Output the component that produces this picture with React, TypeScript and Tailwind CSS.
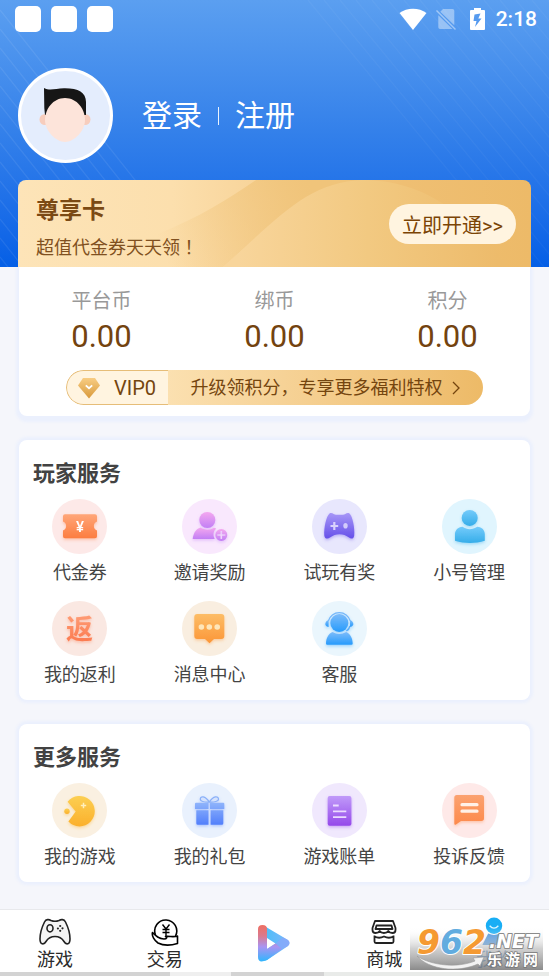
import type { ReactNode } from "react";

type Service = { label: string; icon: ReactNode };

function Gradient({ id, from, to }: { id: string; from: string; to: string }) {
  return (
    <linearGradient id={id} x1="0" y1="0" x2="0" y2="1">
      <stop offset="0" stopColor={from} />
      <stop offset="1" stopColor={to} />
    </linearGradient>
  );
}

function Badge({
  id,
  bg,
  from,
  to,
  children,
}: {
  id: string;
  bg: string;
  from: string;
  to: string;
  children: ReactNode;
}) {
  return (
    <svg viewBox="0 0 55 55" className="size-[55px]" aria-hidden="true">
      <defs>
        <Gradient id={id} from={from} to={to} />
        <filter id={`${id}-shadow`} x="-30%" y="-30%" width="160%" height="160%">
          <feDropShadow dx="0" dy="1.5" stdDeviation="1.5" floodColor={to} floodOpacity="0.4" />
        </filter>
      </defs>
      <circle cx="27.5" cy="27.5" r="27.5" fill={bg} />
      <g fill={`url(#${id})`} filter={`url(#${id}-shadow)`}>
        {children}
      </g>
    </svg>
  );
}

const playerServices: Service[] = [
  {
    label: "代金券",
    icon: (
      <Badge id="ticket" bg="#fde9e8" from="#ffa679" to="#fc7d40">
        <path d="M13 15.3H43A2 2 0 0 1 45 17.3V22.5A4.8 4.8 0 0 0 45 31.5V37.3A2 2 0 0 1 43 39.3H13A2 2 0 0 1 11 37.3V31.5A4.8 4.8 0 0 0 11 22.5V17.3A2 2 0 0 1 13 15.3Z" />
        <text x="28" y="33" textAnchor="middle" fontSize="15" fontWeight="500" fill="#fff" fontFamily="Roboto, sans-serif">¥</text>
      </Badge>
    ),
  },
  {
    label: "邀请奖励",
    icon: (
      <Badge id="invite" bg="#f9e8fd" from="#f4a8ef" to="#c27ff5">
        <circle cx="25.3" cy="21" r="8" />
        <path d="M10.7 40C11.5 34 14 30 18.5 28.5C23 31.3 28 31.3 32 28.7L34.2 29.6A8 8 0 0 0 32.7 40Z" />
        <path fillRule="evenodd" d="M39.3 30A6 6 0 1 1 39.3 42A6 6 0 1 1 39.3 30ZM38.5 32V35.2H35.3V36.8H38.5V40H40.1V36.8H43.3V35.2H40.1V32Z" />
      </Badge>
    ),
  },
  {
    label: "试玩有奖",
    icon: (
      <Badge id="trial" bg="#e8e7fd" from="#a797f7" to="#6650e9">
        <path d="M17.5 14.5C20 12.8 22 15.8 24 15.8H31C33 15.8 35 12.8 37.5 14.5C40.5 17 43 29.5 42.2 36.5C41.6 40.4 38.8 40 37 38.5C31.5 34 23.5 34 18 38.5C16.2 40 12.8 40.4 12.3 36.5C11.7 29.5 14.3 17 17.5 14.5Z" />
        <path d="M22.3 23V31M18.5 27H26.2" stroke="#d9d2fc" strokeWidth="2.2" />
        <ellipse cx="33.5" cy="26.7" rx="2.2" ry="2.8" fill="#d3cbfb" />
      </Badge>
    ),
  },
  {
    label: "小号管理",
    icon: (
      <Badge id="account" bg="#e0f5fe" from="#74cbfb" to="#35ade9">
        <circle cx="27.7" cy="18.9" r="8" />
        <path d="M20.5 27.7C25 31 30.5 31 35.3 27.7C40 28 42.8 31.3 42.8 35V41.8C33 44.8 23 44.8 13 41.8V35C13 31.3 16 28 20.5 27.7Z" />
      </Badge>
    ),
  },
  {
    label: "我的返利",
    icon: (
      <Badge id="rebate" bg="#fae8e2" from="#ffa57f" to="#fb7448">
        <text x="27.5" y="38" textAnchor="middle" fontSize="27" fontWeight="700" fontFamily="'Noto Sans CJK SC', sans-serif">返</text>
      </Badge>
    ),
  },
  {
    label: "消息中心",
    icon: (
      <Badge id="message" bg="#f9eee0" from="#fdbd66" to="#fb9638">
        <path d="M15.3 13H39.3A3 3 0 0 1 42.3 16V35A3 3 0 0 1 39.3 38H32L27.5 42.3L23 38H15.3A3 3 0 0 1 12.3 35V16A3 3 0 0 1 15.3 13Z" />
        <g fill="#fee6b9">
          <circle cx="19.4" cy="26" r="2.8" />
          <circle cx="27.3" cy="26" r="2.8" />
          <circle cx="35.2" cy="26" r="2.8" />
        </g>
      </Badge>
    ),
  },
  {
    label: "客服",
    icon: (
      <Badge id="support" bg="#eaf6fd" from="#7dbcfa" to="#279bfc">
        <path d="M16.3 20A11.4 11.4 0 0 1 38.3 20" fill="none" stroke="#74b7fa" strokeWidth="1.2" />
        <path d="M16.6 19V26C14 25.5 12.9 23.8 13.4 22.2C14 20.5 15.2 19.3 16.6 19ZM38 19V26C40.6 25.5 41.8 23.8 41.2 22.2C40.6 20.5 39.4 19.3 38 19Z" />
        <path d="M38 25C37.4 27.6 36.2 29 34.3 30" fill="none" stroke="#5aaefa" strokeWidth="1.4" />
        <circle cx="27.3" cy="22" r="9" />
        <path d="M20.5 31C25 33.6 29.5 33.6 34.2 31C38.3 33 40.6 37 40.7 42.4Q40.7 43.7 39.5 43.7H15.2Q14 43.7 14 42.4C14.2 37 16.3 33 20.5 31Z" />
      </Badge>
    ),
  },
];

const moreServices: Service[] = [
  {
    label: "我的游戏",
    icon: (
      <Badge id="games" bg="#faf0e1" from="#fccf52" to="#fbb02c">
        <path d="M23.7 28.5L15.6 18.8A15.2 15.2 0 1 1 16.4 38.5Z" />
        <circle cx="15" cy="28.3" r="2.7" />
        <path d="M31.5 19.8V25.2M28.8 22.5H34.2" stroke="#fff0bd" strokeWidth="1.5" />
      </Badge>
    ),
  },
  {
    label: "我的礼包",
    icon: (
      <Badge id="gifts" bg="#e9f1fd" from="#8fb4fb" to="#527ffb">
        <path d="M27.3 19C23 12.5 18.4 12.8 18.3 16.2C18.3 18.3 22 19.3 27.3 19C32.6 19.3 36.5 18.3 36.5 16.2C36.3 12.8 31.6 12.5 27.3 19" fill="none" stroke="#8ab0f8" strokeWidth="1.3" />
        <path d="M14 19.7H26.5V26H13V20.7A1 1 0 0 1 14 19.7ZM28 19.7H41.3A1 1 0 0 1 42.3 20.7V26H28ZM14.3 27.3H26.5V41.7H15.8A1.5 1.5 0 0 1 14.3 40.2ZM28.6 27.3H41.3V40.2A1.5 1.5 0 0 1 39.8 41.7H28.6Z" />
      </Badge>
    ),
  },
  {
    label: "游戏账单",
    icon: (
      <Badge id="bills" bg="#f0e8fd" from="#c09af9" to="#9549ea">
        <rect x="15.7" y="13" width="23.7" height="29.7" rx="2" />
        <path d="M21 22.5H26.7M21 28.4H34.3M21 34.1H34.3" stroke="#ecdcff" strokeWidth="1.8" />
      </Badge>
    ),
  },
  {
    label: "投诉反馈",
    icon: (
      <Badge id="feedback" bg="#fee9e8" from="#fba270" to="#fd8a4c">
        <path d="M15.3 12H39.3A2.8 2.8 0 0 1 42 14.8V35.2A2.8 2.8 0 0 1 39.3 38H19L14 41.6Q12.3 42.3 12.3 40.5V14.8A2.8 2.8 0 0 1 15.3 12Z" />
        <path d="M20 21.7H35M20 28.2H35" stroke="#fff1e8" strokeWidth="3.2" strokeLinecap="round" />
      </Badge>
    ),
  },
];

const balances = [
  { label: "平台币", value: "0.00" },
  { label: "绑币", value: "0.00" },
  { label: "积分", value: "0.00" },
];

function HeaderStripes() {
  const left = Array.from({ length: 16 }, (_, i) => 10 + i * 19);
  const right = Array.from({ length: 18 }, (_, i) => 308 + i * 16);
  return (
    <svg className="pointer-events-none absolute inset-0 size-full" aria-hidden="true" stroke="#fff" strokeWidth="1.3">
      <g strokeOpacity="0.08">
        {left.map((y) => (
          <path key={y} d={`M0 ${y}L220 ${y + 277}`} />
        ))}
      </g>
      <g strokeOpacity="0.04">
        {right.map((x) => (
          <path key={x} d={`M${x} 0L${x + 220} 267`} />
        ))}
      </g>
    </svg>
  );
}

function StatusBar() {
  return (
    <div className="flex items-center justify-between pl-[15px] pr-3 pt-[6px]">
      <div className="flex gap-[10px]">
        <span className="size-[26px] rounded-[5px] bg-white" />
        <span className="size-[26px] rounded-[5px] bg-white" />
        <span className="size-[26px] rounded-[5px] bg-white" />
      </div>
      <div className="flex h-[26px] items-center text-white">
        <svg viewBox="0 0 28 24" className="mr-2 h-6 w-7" fill="currentColor" aria-hidden="true">
          <path d="M.5 6C8 .2 20 .2 27.5 6L14 23Z" />
        </svg>
        <svg viewBox="0 0 22 24" className="mr-3 h-6 w-[22px]" aria-hidden="true">
          <path d="M8 2H17.5A1.8 1.8 0 0 1 19.3 3.8V18.2L5.3 4.8ZM3.3 8.2L17.5 22H5A1.7 1.7 0 0 1 3.3 20.3Z" fill="#fff" fillOpacity="0.4" />
          <path d="M1.500 3.500L20.500 22.500" stroke="#fff" strokeOpacity="0.45" strokeWidth="1.500" />
        </svg>
        <svg viewBox="0 0 17 24" className="mr-[10px] h-6 w-[17px]" aria-hidden="true">
          <path fillRule="evenodd" fill="#fff" d="M5 1H12V3H15A1 1 0 0 1 16 4V22A1 1 0 0 1 15 23H2A1 1 0 0 1 1 22V4A1 1 0 0 1 2 3H5ZM11.500 6.500L5.500 7.500L4.500 14H7.500L6 20L12.500 11.500H9.300Z" />
        </svg>
        <span className="font-['Roboto',sans-serif] text-[21px] font-medium leading-6">2:18</span>
      </div>
    </div>
  );
}

function Avatar() {
  return (
    <svg viewBox="0 0 95 95" className="size-[95px] shrink-0" role="img" aria-label="头像">
      <circle cx="47.5" cy="47.5" r="46" fill="#e4edfd" stroke="#fff" strokeWidth="3" />
      <circle cx="27" cy="51.5" r="5.5" fill="#f7cdbd" />
      <circle cx="67" cy="51.5" r="5.5" fill="#f7cdbd" />
      <path d="M26 20C32 23 37 20.5 46 20.2C60 20 68 24 68 34V47H27L26.3 40Z" fill="#161616" />
      <path d="M47 30C59 30 67 41 67 52C67 63 56 74 47 74C38 74 27 63 27 52C27 41 35 30 47 30Z" fill="#fde4da" />
    </svg>
  );
}

function PremiumBanner() {
  return (
    <section className="relative mx-[18px] mt-[17px] flex h-[87px] items-center justify-between overflow-hidden rounded-t-lg pl-[18px] pr-[15px]">
      <svg className="absolute inset-0 size-full" viewBox="0 0 513 87" preserveAspectRatio="none" aria-hidden="true">
        <defs>
          <linearGradient id="banner-base">
            <stop offset="0" stopColor="#fde4b8" />
            <stop offset="0.3" stopColor="#fcdfad" />
            <stop offset="0.5" stopColor="#f7d296" />
            <stop offset="0.75" stopColor="#efbf73" />
            <stop offset="1" stopColor="#edba68" />
          </linearGradient>
          <linearGradient id="banner-arc" gradientUnits="userSpaceOnUse" x1="220" y1="0" x2="480" y2="0">
            <stop offset="0" stopColor="#f8d59b" />
            <stop offset="0.5" stopColor="#f2c981" />
            <stop offset="1" stopColor="#edbb6b" />
          </linearGradient>
          <linearGradient id="banner-sweep" gradientUnits="userSpaceOnUse" x1="140" y1="60" x2="290" y2="0">
            <stop offset="0" stopColor="#f0c47a" stopOpacity="0" />
            <stop offset="1" stopColor="#f0c47a" />
          </linearGradient>
        </defs>
        <rect width="513" height="87" fill="url(#banner-base)" />
        <path d="M140 54C180 38 212 18 238 0H345C300 4 262 36 205 87H120Z" fill="url(#banner-sweep)" />
        <path d="M205 87C262 36 290 2 345 0C392 0 440 20 490 87Z" fill="url(#banner-arc)" />
      </svg>
      <div className="relative pt-3 text-[#7b4a14]">
        <h2 className="text-[23px] font-bold leading-7">尊享卡</h2>
        <p className="mt-[7px] text-lg leading-7 text-[#805020]">
          超值代金券天天领<span className="font-['Noto_Sans_CJK_JP',sans-serif]" lang="ja">！</span>
        </p>
      </div>
      <button type="button" className="relative h-10 w-[127px] rounded-full bg-[#fff4e0] pt-1 text-xl text-[#7b4405]">
        立即开通&gt;&gt;
      </button>
    </section>
  );
}

function VipBar() {
  return (
    <a href="#vip" className="mx-[47px] mt-[15px] flex h-[35px] overflow-hidden rounded-full text-[#74450f]">
      <span className="flex w-[102px] shrink-0 items-center justify-between rounded-l-full border border-r-0 border-[#e6bd78] bg-[#fff4e0] pl-[10px] pr-3">
        <svg viewBox="0 0 24 22" className="h-[22px] w-6" aria-hidden="true">
          <defs>
            <Gradient id="gem" from="#f8cd83" to="#d8993c" />
          </defs>
          <path d="M6 1H18L23 8.5L12 21.5L1 8.5Z" fill="url(#gem)" />
          <path d="M8.8 8.3L12 11.2L15.2 8.3" fill="none" stroke="#fff" strokeWidth="1.8" />
        </svg>
        <span className="text-xl">VIP0</span>
      </span>
      <span className="flex min-w-0 flex-1 items-center justify-center whitespace-nowrap bg-linear-to-r from-[#fbe0b0] to-[#edba67] text-lg">
        升级领积分，专享更多福利特权
        <svg viewBox="0 0 10 16" className="ml-2 h-4 w-[10px] shrink-0" fill="none" stroke="currentColor" strokeWidth="1.3" aria-hidden="true">
          <path d="M2 2L8 8L2 14" />
        </svg>
      </span>
    </a>
  );
}

function ServiceCard({ title, items }: { title: string; items: Service[] }) {
  return (
    <section className="mx-[19px] mt-6 rounded-lg bg-white pb-[11px] pt-5 shadow-[0_0_3px_3px_#ebf0fd]">
      <h2 className="pl-[14px] text-[22px] font-bold leading-7 text-[#424242]">{title}</h2>
      <div className="mt-[11px] grid grid-cols-4 gap-x-11 gap-y-[14px] px-[18px]">
        {items.map((item) => (
          <button key={item.label} type="button" className="flex flex-col items-center">
            {item.icon}
            <span className="mt-[5px] whitespace-nowrap text-lg leading-7 text-[#444]">{item.label}</span>
          </button>
        ))}
      </div>
    </section>
  );
}

function TabBar() {
  return (
    <nav className="relative mt-auto border-t border-[#e8e9ec] bg-white">
      <div className="grid h-[62px] grid-cols-5 text-lg leading-6 text-[#2b2b2b]">
        <a href="#games" className="flex flex-col items-center pt-2">
          <svg viewBox="0 0 32 28" className="h-7 w-8" fill="#f4f4f4" stroke="#222" strokeWidth="1.6" strokeLinejoin="round" aria-hidden="true">
            <path d="M5.5 4C7 1 10 1.2 12 2.5C14.5 3.5 17.5 3.5 20 2.5C22 1.2 25 1 26.5 4C29 9 31 15 31 21C31 27 27 27 25 23.5C22.5 19.5 20 18.5 16 18.5C12 18.5 9.5 19.5 7 23.5C5 27 1 27 1 21C1 15 3 9 5.5 4Z" />
            <ellipse cx="11" cy="10.3" rx="3" ry="3.6" />
            <g fill="#222" stroke="none">
              <circle cx="21.2" cy="8" r="1.1" />
              <circle cx="18.9" cy="10.5" r="1.1" />
              <circle cx="23.5" cy="10.3" r="1.1" />
              <circle cx="21.2" cy="12.8" r="1.1" />
            </g>
          </svg>
          <span className="mt-[2px]">游戏</span>
        </a>
        <a href="#trade" className="flex flex-col items-center pt-2">
          <svg viewBox="0 0 28 28" className="size-7" fill="none" stroke="#000" strokeWidth="1.6" strokeLinejoin="round" aria-hidden="true">
            <path d="M4.5 17A11 11 0 1 1 24.5 18" />
            <path d="M11.5 6.5L15 11L18.500 6.500M11.500 11.500H18.500M11.500 14.500H18.500M15 11V18" strokeWidth="1.4" />
            <path d="M1.500 14.500C5 18 8 21 13 21C16 21 16.500 19 14.500 18.500C19 18 22.500 19.500 26.500 18V25.500C20 27.500 12 27.500 7 25C3.500 22.500 .500 18 1.500 14.500Z" fill="#fff" />
          </svg>
          <span className="mt-[2px]">交易</span>
        </a>
        <a href="#home" aria-label="首页" className="flex justify-center pt-[14px]">
          <svg viewBox="0 0 34 38" className="h-[38px] w-[34px]" aria-hidden="true">
            <defs>
              <linearGradient id="play-left" x1="0" y1="0" x2="0" y2="1">
                <stop offset="0" stopColor="#ef6f62" />
                <stop offset="0.3" stopColor="#da7a8e" />
                <stop offset="0.6" stopColor="#a994f3" />
                <stop offset="1" stopColor="#2fb6fd" />
              </linearGradient>
              <linearGradient id="play-right">
                <stop offset="0" stopColor="#46c0f8" />
                <stop offset="1" stopColor="#7fb5fb" />
              </linearGradient>
            </defs>
            <path d="M9 3L31 16Q34 19 31 22L10 36Q6 38 5 34V4Q6 1 9 3ZM10 14V25L18.500 19.500Z" fill="url(#play-right)" fillRule="evenodd" />
            <path d="M18.500 19.500L26 13.500L31 16Q34 19 31 22L25 25Z" fill="#8aa5fa" fillOpacity=".7" />
            <path d="M1 5Q1 1 5.500 1Q10 1 10 5V25L18.500 19.500L25 25L10 36Q1 40 1 33Z" fill="url(#play-left)" />
          </svg>
        </a>
        <a href="#shop" className="flex flex-col items-center pt-2">
          <svg viewBox="0 0 26 28" className="h-7 w-[26px]" fill="none" stroke="#222" strokeWidth="1.8" strokeLinejoin="round" aria-hidden="true">
            <path d="M4 3H22L24.5 10V12Q24.500 15 21.500 15Q18.500 15 17.300 13Q16 15 13 15Q10 15 8.700 13Q7.500 15 4.500 15Q1.500 15 1.500 12V10Z" />
            <path d="M5.500 7.500H20.500L21.500 11H4.500Z" />
            <path d="M3.500 17.500V23.500Q3.500 25 5 25H21Q22.500 25 22.500 23.500V17.500M3.500 18.500Q8 21 13 18.500Q18 21 22.500 18.500" />
          </svg>
          <span className="mt-[2px]">商城</span>
        </a>
        <a href="#mine" className="flex flex-col items-center pt-[7px] text-[#3b7fd0]">
          <svg viewBox="0 0 26 30" className="h-[29px] w-[26px]" aria-hidden="true">
            <circle cx="13" cy="9" r="8.5" fill="#18aef5" />
            <path d="M8.500 9Q13 14 17.500 9" fill="none" stroke="#d9f4ff" strokeWidth="1.5" />
            <path d="M7 17Q13 20 19 17L25 29H1Z" fill="#3f8fe0" />
          </svg>
          <span className="mt-[2px]">我的</span>
        </a>
      </div>
      <div className="flex h-1">
        <span className="w-[31%] bg-[#d3d3d3]" />
        <span className="w-[11%] bg-[#efefef]" />
        <span className="w-[17%] bg-[#d3d3d3]" />
        <span className="flex-1 bg-[#e9ebe9]" />
      </div>
      <Watermark />
    </nav>
  );
}

function Watermark() {
  return (
    <svg viewBox="0 0 133 43" className="pointer-events-none absolute bottom-[6px] right-[6px] h-[43px] w-[133px] overflow-visible" role="img" aria-label="962.NET 乐游网">
      <defs>
        <linearGradient id="mark-bg" x1="0" y1="0" x2="0" y2="1">
          <stop offset="0" stopColor="#fff" stopOpacity="0" />
          <stop offset="0.5" stopColor="#bdbdbd" stopOpacity=".7" />
          <stop offset="1" stopColor="#767676" stopOpacity=".85" />
        </linearGradient>
      </defs>
      <rect width="133" height="43" fill="url(#mark-bg)" />
      <path d="M7 29C22 39 48 41 65 34L63 31L74 30L70 39L68 37C48 46 19 43 7 29Z" fill="#f2f2f2" stroke="#999" strokeWidth=".6" />
      <g fontFamily="'DejaVu Sans', sans-serif" fontWeight="700" fontStyle="italic" strokeLinejoin="round" paintOrder="stroke">
        <text x="7" y="27" fontSize="33" stroke="#fff" strokeWidth="2">
          <tspan fill="#f59a32">9</tspan>
          <tspan fill="#62acdf">6</tspan>
          <tspan fill="#f59a32">2</tspan>
        </text>
        <text x="79" y="21" fontSize="19" fill="#fff" stroke="#8b8b8b" strokeWidth="2">.NET</text>
      </g>
      <text x="77 95 113" y="38" fontSize="15" fontWeight="700" fontFamily="'Noto Sans CJK SC', sans-serif" fill="#fff" stroke="#777" strokeWidth="1.5" paintOrder="stroke">乐游网</text>
    </svg>
  );
}

export default function App() {
  return (
    <div className="flex min-h-screen flex-col bg-[#f5f6fb] font-['Roboto','Noto_Sans_CJK_SC',sans-serif]">
      <header className="relative bg-linear-to-b from-[#5b9ff0] via-[#3380ea] to-[#045fe6]">
        <HeaderStripes />
        <div className="relative">
          <StatusBar />
          <div className="mt-9 flex items-center pl-[18px]">
            <Avatar />
            <div className="ml-[29px] flex items-center text-[30px] leading-10 text-white">
              <a href="#login">登录</a>
              <span className="mx-4 h-[18px] w-px bg-white/90" />
              <a href="#register">注册</a>
            </div>
          </div>
          <PremiumBanner />
        </div>
      </header>

      <section className="mx-[19px] rounded-b-lg bg-white pb-[11px] pt-5 shadow-[0_3px_3px_3px_#ebf0fd]">
        <dl className="grid grid-cols-3 gap-x-10 px-4 text-center">
          {balances.map((b) => (
            <div key={b.label}>
              <dt className="text-xl leading-7 text-[#999]">{b.label}</dt>
              <dd className="mt-1 text-[31px] leading-9 text-[#73430f]">{b.value}</dd>
            </div>
          ))}
        </dl>
        <VipBar />
      </section>

      <ServiceCard title="玩家服务" items={playerServices} />
      <ServiceCard title="更多服务" items={moreServices} />
      <TabBar />
    </div>
  );
}
